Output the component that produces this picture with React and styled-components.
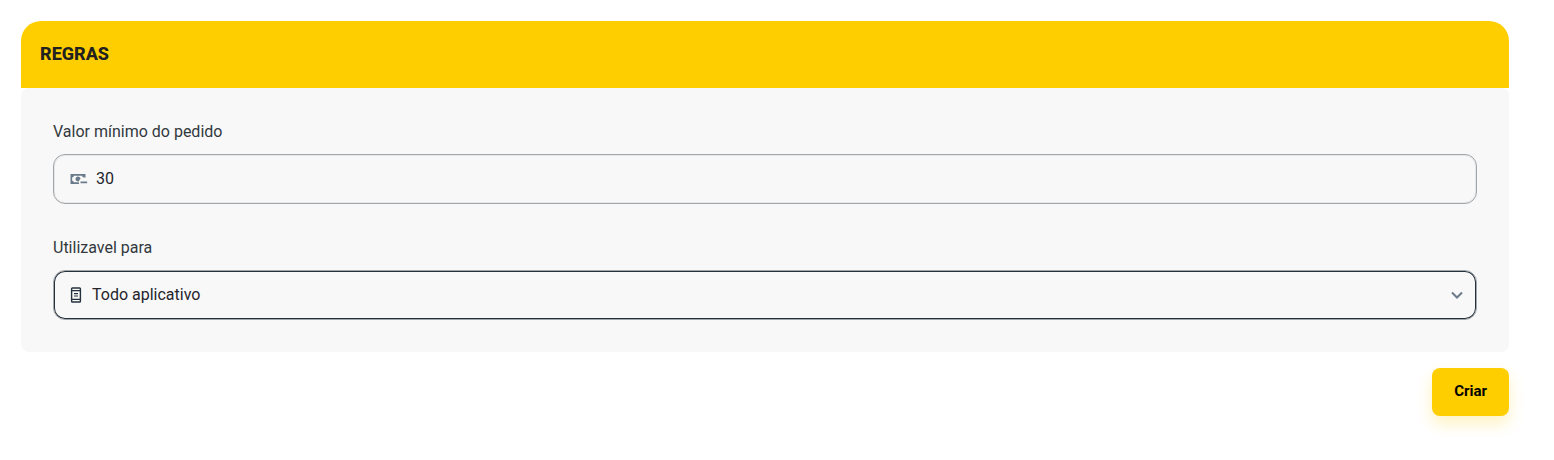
import { useState } from "react";
import styled, { createGlobalStyle } from "styled-components";

const CashMinusIcon = () => (
  <svg width="20" height="20" viewBox="0 0 24 24" fill="currentColor" aria-hidden="true">
    <path d="M15 15V17H23V15M14.97 11.61C14.85 10.28 13.59 8.97 12 9C10.3 9.03 9 10.3 9 12C9 13.7 10.3 14.94 12 15C12.38 15 12.77 14.92 13.14 14.77C13.41 13.67 13.86 12.63 14.97 11.61M13 16H7C7 14.9 6.11 14 5 14V10C6.11 10 7 9.11 7 8H17C17 9.11 17.9 10 19 10V10.06C19.67 10.06 20.34 10.18 21 10.4V6H3V18H13.32C13.1 17.33 13 16.66 13 16Z" />
  </svg>
);

const PhoneTextIcon = () => (
  <svg width="16" height="16" viewBox="0 0 16 16" fill="none" stroke="currentColor" aria-hidden="true">
    <rect x="3.6" y="1" width="8.8" height="14" rx="0.8" strokeWidth="1.4" />
    <path d="M3 3.6h10M3 12.4h10" strokeWidth="1.3" />
    <path d="M6 6.6h4M6 9h4" strokeWidth="1.1" />
  </svg>
);

const ChevronIcon = () => (
  <svg width="20" height="20" viewBox="0 0 20 20" fill="none" aria-hidden="true">
    <path
      d="M5 7.5l5 5 5-5"
      stroke="currentColor"
      strokeWidth="2"
    />
  </svg>
);

const App = () => {
  const [minValue, setMinValue] = useState("30");
  const [target, setTarget] = useState("all");

  const submitHandler = (e) => {
    e.preventDefault();
  };

  return (
    <>
      <GlobalStyle />
      <RulesForm onSubmit={submitHandler}>
        <Card>
          <CardHeader>
            <CardTitle>REGRAS</CardTitle>
          </CardHeader>
          <CardBody>
            <Field>
              <Label htmlFor="minValue">Valor mínimo do pedido</Label>
              <InputBox>
                <StartIcon>
                  <CashMinusIcon />
                </StartIcon>
                <STInput
                  id="minValue"
                  inputMode="numeric"
                  value={minValue}
                  onChange={(e) => setMinValue(e.target.value)}
                />
              </InputBox>
            </Field>
            <Field>
              <Label htmlFor="target">Utilizavel para</Label>
              <InputBox $active>
                <StartIcon $dark>
                  <PhoneTextIcon />
                </StartIcon>
                <STSelect
                  id="target"
                  value={target}
                  onChange={(e) => setTarget(e.target.value)}
                >
                  <option value="all">Todo aplicativo</option>
                </STSelect>
                <EndIcon>
                  <ChevronIcon />
                </EndIcon>
              </InputBox>
            </Field>
          </CardBody>
        </Card>
        <SubmitButton type="submit">Criar</SubmitButton>
      </RulesForm>
    </>
  );
};

export default App;

const GlobalStyle = createGlobalStyle`
  * {
    box-sizing: border-box;
  }

  body {
    margin: 0;
    background: #fff;
    font-family: Roboto, "Liberation Sans", sans-serif;
  }
`;

const RulesForm = styled.form`
  display: flex;
  flex-direction: column;
  gap: 16px;
  padding: 21px 45px 21px 21px;
`;

const Card = styled.section`
  display: flex;
  flex-direction: column;
`;

const CardHeader = styled.header`
  padding: 21px 19px 22px;
  border-radius: 20px 20px 0 0;
  background: #ffce00;
`;

const CardTitle = styled.h2`
  margin: 0;
  color: #212121;
  font-size: 18px;
  font-weight: 800;
  line-height: 24px;
`;

const CardBody = styled.div`
  display: flex;
  flex-direction: column;
  gap: 32px;
  padding: 32px;
  border-radius: 8px;
  background: #f8f8f8;
`;

const Field = styled.div`
  display: flex;
  flex-direction: column;
  gap: 10px;
`;

const Label = styled.label`
  color: #32383e;
  font-size: 16px;
  line-height: 24px;
`;

const InputBox = styled.div`
  display: flex;
  align-items: center;
  height: 50px;
  padding: 0 9px 0 14px;
  border: 1px solid #a3a6a9;
  border-radius: 12px;
  color: #25252d;
  box-shadow: inset 0 0 0 1px ${({ $active }) => ($active ? "#25313d" : "#e6e7e8")};
`;

const StartIcon = styled.span`
  display: flex;
  margin-right: 8px;
  color: ${({ $dark }) => ($dark ? "#25313d" : "#6b7a8a")};
`;

const EndIcon = styled.span`
  display: flex;
  margin-left: -24px;
  color: #6b7a8a;
  pointer-events: none;
`;

const STInput = styled.input`
  flex: 1;
  min-width: 0;
  height: 100%;
  padding: 0 0 2px;
  border: 0;
  outline: 0;
  background: transparent;
  color: inherit;
  font: inherit;
  font-size: 16px;
`;

const STSelect = styled.select`
  flex: 1;
  min-width: 0;
  height: 100%;
  padding: 0 0 2px;
  border: 0;
  outline: 0;
  appearance: none;
  background: transparent;
  color: inherit;
  font: inherit;
  font-size: 16px;
`;

const SubmitButton = styled.button`
  align-self: flex-end;
  height: 48px;
  padding: 0 22px 2px;
  border: 0;
  border-radius: 8px;
  background: #ffce00;
  box-shadow: 0 8px 16px rgba(255, 206, 0, 0.24);
  color: #000;
  font-family: inherit;
  font-size: 15px;
  font-weight: 700;
  cursor: pointer;
`;
